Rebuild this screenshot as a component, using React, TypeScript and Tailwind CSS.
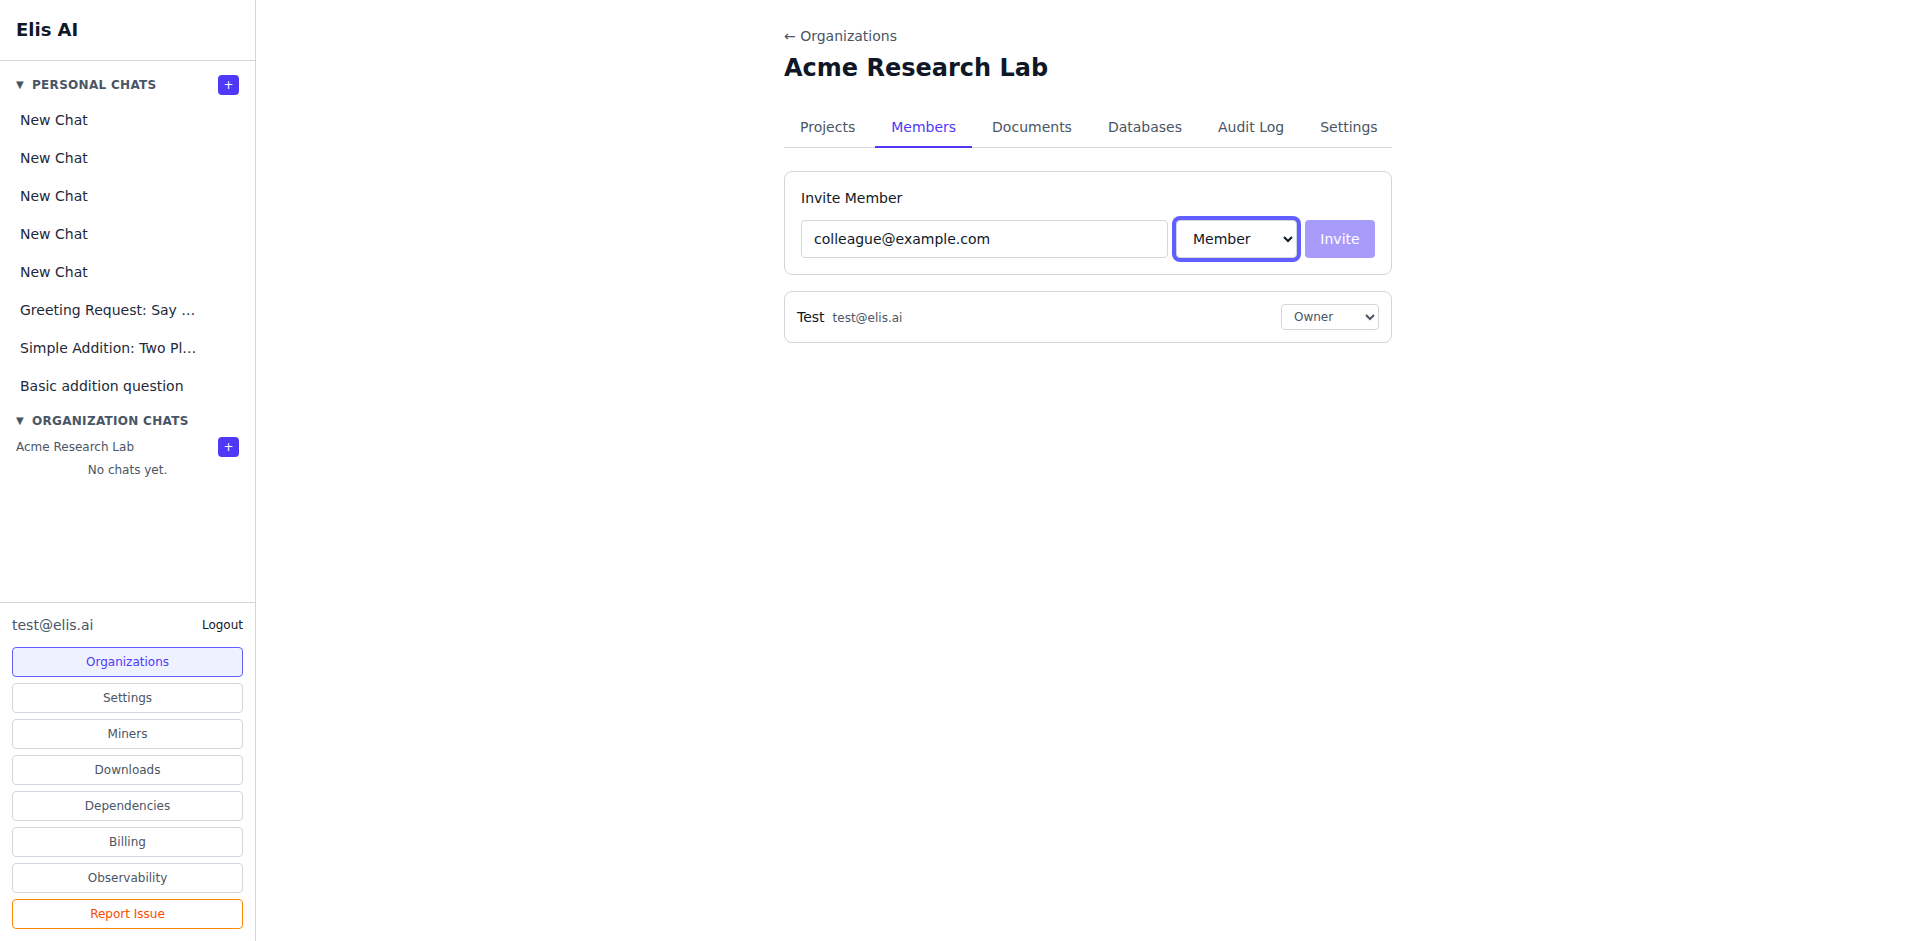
import React, { useState } from 'react';

const personalChats = [
  'New Chat',
  'New Chat',
  'New Chat',
  'New Chat',
  'New Chat',
  'Greeting Request: Say Hello to the World',
  'Simple Addition: Two Plus Two',
  'Basic addition question',
];

const navButtons = ['Organizations', 'Settings', 'Miners', 'Downloads', 'Dependencies', 'Billing', 'Observability'];

const tabs = ['Projects', 'Members', 'Documents', 'Databases', 'Audit Log', 'Settings'];

const PlusButton: React.FC = () => (
  <button className="flex h-5 w-[21px] items-center justify-center rounded bg-indigo-600 text-xs leading-none text-white">
    +
  </button>
);

const Sidebar: React.FC = () => (
  <aside className="flex h-screen w-64 shrink-0 flex-col border-r border-gray-300 bg-white">
    <div className="border-b border-gray-300 p-4">
      <h1 className="text-lg font-bold leading-7 text-gray-900">Elis AI</h1>
    </div>

    <nav className="flex-1 overflow-y-auto px-3 pt-3">
      <div className="mb-[5px] flex h-6 items-center justify-between px-1">
        <div className="flex items-center gap-2 text-xs font-bold uppercase tracking-wide text-gray-600">
          <span className="text-[10px]">▼</span>
          <span>Personal Chats</span>
        </div>
        <PlusButton />
      </div>
      <div className="flex flex-col gap-0.5">
        {personalChats.map((title, i) => (
          <div key={i} className="rounded px-2 py-2 text-sm text-gray-800">
            <span className="block w-[182px] truncate">{title}</span>
          </div>
        ))}
      </div>

      <div className="mt-[9px] flex h-4 items-center gap-2 px-1 text-xs font-bold uppercase tracking-wide text-gray-600">
        <span className="text-[10px]">▼</span>
        <span>Organization Chats</span>
      </div>
      <div className="mt-2 flex h-5 items-center justify-between px-1">
        <span className="text-xs text-gray-600">Acme Research Lab</span>
        <PlusButton />
      </div>
      <p className="mt-[5px] text-center text-xs text-gray-600">No chats yet.</p>
    </nav>

    <div className="border-t border-gray-300 px-3 pb-3 pt-3">
      <div className="mb-3 flex items-center justify-between">
        <span className="text-sm text-gray-600">test@elis.ai</span>
        <button className="text-xs text-gray-900">Logout</button>
      </div>
      <div className="flex flex-col gap-1.5">
        {navButtons.map(label => (
          <button
            key={label}
            className={
              label === 'Organizations'
                ? 'w-full rounded border border-indigo-500 bg-indigo-50 py-1.5 text-xs text-indigo-600'
                : 'w-full rounded border border-gray-300 bg-white py-1.5 text-xs text-gray-600'
            }
          >
            {label}
          </button>
        ))}
        <button className="w-full rounded border border-orange-400 bg-white py-1.5 text-xs text-orange-600">
          Report Issue
        </button>
      </div>
    </div>
  </aside>
);

export default function App() {
  const [email, setEmail] = useState('colleague@example.com');
  const [role, setRole] = useState('member');

  return (
    <div className="flex h-screen bg-white font-['DejaVu_Sans',sans-serif] text-gray-900">
      <Sidebar />
      <main className="flex-1 overflow-y-auto">
        <div className="mx-auto w-full max-w-[608px] pt-[26px]">
          <a className="block text-sm text-gray-600">← Organizations</a>
          <h2 className="mt-1.5 text-2xl font-bold text-gray-900">Acme Research Lab</h2>

          <div className="mt-6 flex gap-1 border-b border-gray-300">
            {tabs.map(tab => (
              <button
                key={tab}
                className={
                  tab === 'Members'
                    ? '-mb-px whitespace-nowrap border-b-2 border-indigo-600 px-4 py-[9px] text-sm text-indigo-600'
                    : '-mb-px whitespace-nowrap border-b-2 border-transparent px-4 py-[9px] text-sm text-gray-600'
                }
              >
                {tab}
              </button>
            ))}
          </div>

          <div className="mt-[23px] flex flex-col gap-4">
            <div className="rounded-lg border border-gray-300 p-4">
              <h3 className="mb-3 text-sm text-gray-900">Invite Member</h3>
              <div className="flex gap-2">
                <input
                  type="email"
                  value={email}
                  onChange={e => setEmail(e.target.value)}
                  className="h-[38px] min-w-0 flex-1 rounded border border-gray-300 px-3 text-sm text-gray-900"
                />
                <select
                  value={role}
                  onChange={e => setRole(e.target.value)}
                  className="h-[38px] w-[121px] rounded border border-gray-300 bg-white px-3 text-sm text-gray-900 ring-4 ring-indigo-500"
                >
                  <option value="member">Member</option>
                  <option value="admin">Admin</option>
                  <option value="viewer">Viewer</option>
                </select>
                <button className="h-[38px] w-[70px] rounded bg-indigo-600/50 text-sm text-white">Invite</button>
              </div>
            </div>

            <div className="flex items-center justify-between rounded-lg border border-gray-300 px-3 py-3">
              <div className="flex items-baseline gap-2">
                <span className="text-sm text-gray-900">Test</span>
                <span className="text-xs text-gray-600">test@elis.ai</span>
              </div>
              <select defaultValue="owner" className="w-[98px] rounded border border-gray-300 bg-white px-2 py-1 text-xs text-gray-600">
                <option value="owner">Owner</option>
                <option value="admin">Admin</option>
                <option value="member">Member</option>
              </select>
            </div>
          </div>
        </div>
      </main>
    </div>
  );
}
